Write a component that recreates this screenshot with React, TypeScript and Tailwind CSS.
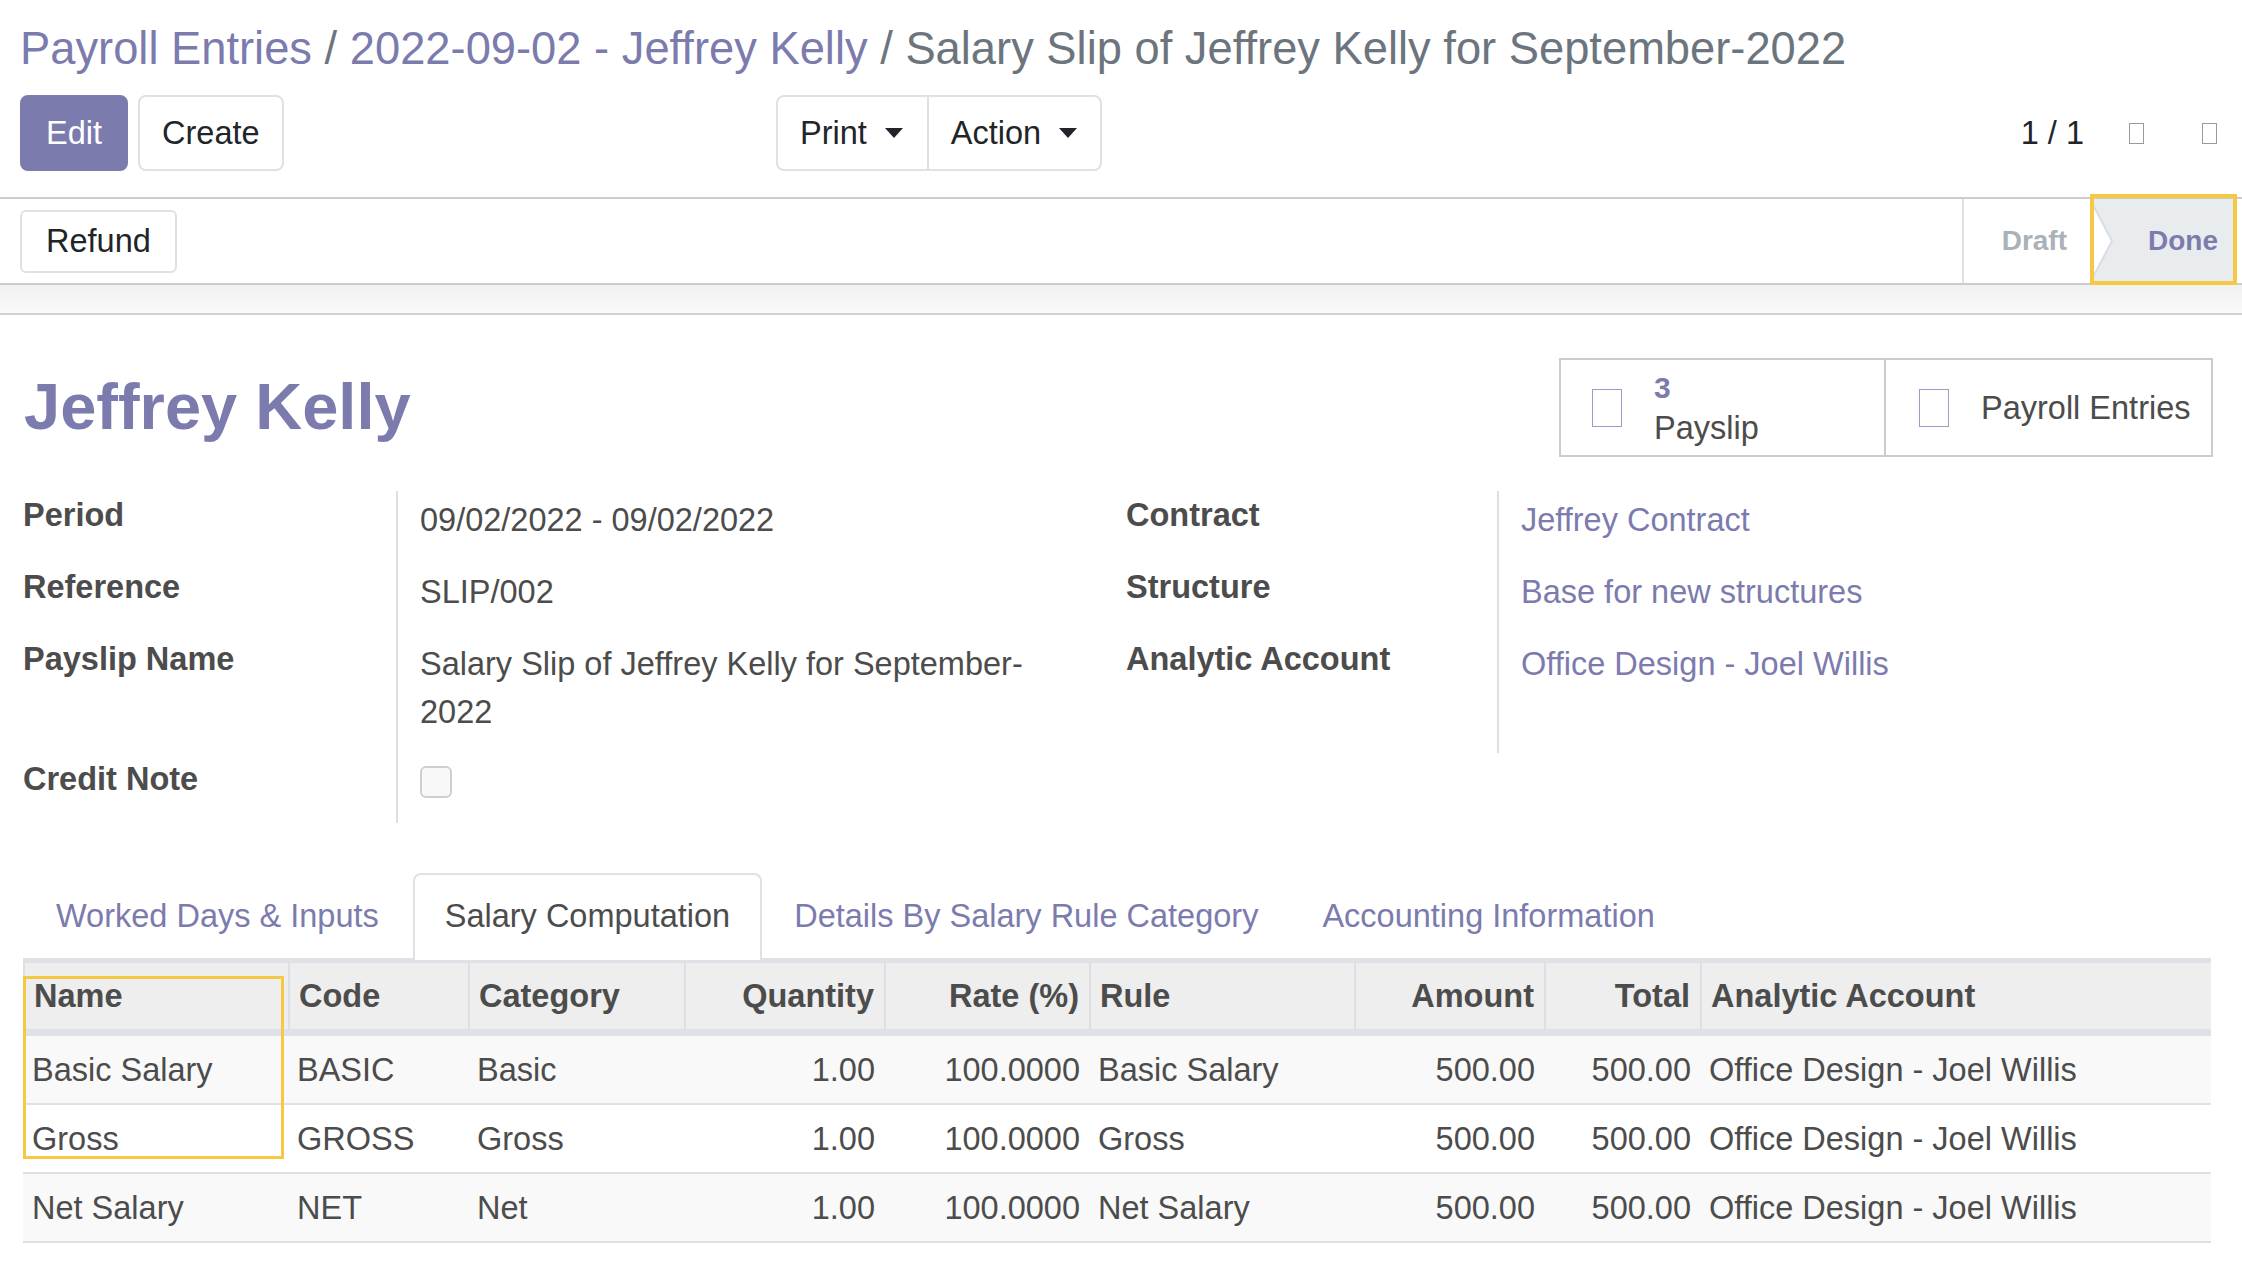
import React from 'react';

const PURPLE = 'text-[#7c7bad]';

type Line = {
  name: string;
  code: string;
  category: string;
  rule: string;
};

const LINES: Line[] = [
  { name: 'Basic Salary', code: 'BASIC', category: 'Basic', rule: 'Basic Salary' },
  { name: 'Gross', code: 'GROSS', category: 'Gross', rule: 'Gross' },
  { name: 'Net Salary', code: 'NET', category: 'Net', rule: 'Net Salary' },
];

const COLS = [
  { label: 'Name', right: false },
  { label: 'Code', right: false },
  { label: 'Category', right: false },
  { label: 'Quantity', right: true },
  { label: 'Rate (%)', right: true },
  { label: 'Rule', right: false },
  { label: 'Amount', right: true },
  { label: 'Total', right: true },
  { label: 'Analytic Account', right: false },
];

const GRID = 'grid grid-cols-[265px_180px_216px_200px_205px_265px_190px_156px_1fr]';

function Caret() {
  return <span className="ml-[18px] inline-block w-0 h-0 border-t-[10px] border-x-[9px] border-x-transparent border-t-[#212529]" />;
}

// missing icon-font glyphs render as hollow boxes in the reference
function Tofu({ className }: { className: string }) {
  return <span className={`inline-block border ${className}`} />;
}

function Field({ label, children, last = false }: { label: string; children?: React.ReactNode; last?: boolean }) {
  return (
    <>
      <div className="font-bold leading-[48px]">{label}</div>
      <div className={`border-l-2 border-[#dedede] pl-[22px] pt-[5px] leading-[48px] ${last ? '' : 'pb-[19px]'}`}>
        {children}
      </div>
    </>
  );
}

export default function App() {
  return (
    <div className="relative min-h-[1280px] w-full bg-white font-['Liberation_Sans',Arial,sans-serif] text-[32.5px] text-[#4c4c4c]">
      {/* control panel */}
      <div className="pl-[20px] pr-[25px] pt-[22px]">
        <div className="text-[45.3px] leading-[53px] whitespace-nowrap">
          <span className={PURPLE}>Payroll Entries</span>
          <span className="text-[#6c757d]"> / </span>
          <span className={PURPLE}>2022-09-02 - Jeffrey Kelly</span>
          <span className="text-[#6c757d]"> / Salary Slip of Jeffrey Kelly for September-2022</span>
        </div>
        <div className="mt-[20px] flex items-center h-[76px] text-[#212529]">
          <div className="w-[756px] flex items-center gap-[10px] h-full">
            <button type="button" className="h-full px-[24px] rounded-[8px] bg-[#7c7bad] border-2 border-[#7c7bad] text-white">Edit</button>
            <button type="button" className="h-full px-[22px] rounded-[8px] border-2 border-[#dee2e6] bg-white">Create</button>
          </div>
          <div className="flex h-full border-2 border-[#dee2e6] rounded-[8px]">
            <div className="flex items-center pl-[22px] pr-[24px]">Print<Caret /></div>
            <div className="flex items-center pl-[22px] pr-[23px] border-l-2 border-[#dee2e6]">Action<Caret /></div>
          </div>
          <div className="ml-auto flex items-center">
            <span>1 / 1</span>
            <Tofu className="ml-[45px] w-[15px] h-[21px] border-[#9a9a9a]" />
            <Tofu className="ml-[58px] w-[15px] h-[21px] border-[#9a9a9a]" />
          </div>
        </div>
      </div>

      {/* status bar */}
      <div className="mt-[26px] h-[88px] border-y-2 border-[#cccccc] flex items-center">
        <button type="button" className="ml-[20px] h-[63px] px-[24px] rounded-[6px] border-2 border-[#dee2e6] bg-white text-[#212529]">Refund</button>
        <div className="ml-auto mr-[5px] flex h-full items-stretch font-bold text-[28px]">
          <div className="flex items-center border-l-2 border-[#dee2e6] pl-[38px] pr-[23px] text-[#aab1b9]">Draft</div>
          <div className={`relative flex items-center w-[147px] pl-[58px] bg-[#e9ecef] ${PURPLE}`}>
            <svg className="absolute left-0 top-0 h-full w-[26px]" viewBox="0 0 26 84" preserveAspectRatio="none">
              <polygon points="0,0 22,42 0,84" fill="#ffffff" />
              <polyline points="0,0 22,42 0,84" fill="none" stroke="#d9dde1" strokeWidth="2" />
            </svg>
            Done
          </div>
        </div>
      </div>

      {/* sheet background strip */}
      <div className="h-[30px] bg-gradient-to-b from-[#f1f1f1] to-[#fafafa] border-b-2 border-[#cfcfd6]" />

      {/* sheet */}
      <div className="pl-[23px] pr-[31px] pt-[44px]">
        <div className="flex justify-between items-start">
          <h1 className={`ml-[1px] mt-[9px] text-[65px] leading-[77px] font-bold ${PURPLE}`}>Jeffrey Kelly</h1>
          <div className="-mr-[2px] -mt-[1px] flex h-[99px] w-[654px] border-2 border-[#cccccc]">
            <div className="flex items-center w-[325px] border-r-2 border-[#cccccc] pl-[31px]">
              <Tofu className="w-[30px] h-[38px] border-[#9d9bc9]" />
              <div className="ml-[32px] leading-[40px]">
                <div className={`font-bold text-[30px] ${PURPLE}`}>3</div>
                <div>Payslip</div>
              </div>
            </div>
            <div className="flex items-center pl-[33px]">
              <Tofu className="w-[30px] h-[38px] border-[#9d9bc9]" />
              <span className="ml-[32px] leading-[48px]">Payroll Entries</span>
            </div>
          </div>
        </div>

        <div className="mt-[34px] flex">
          <div className="w-[1094px] grid grid-cols-[373px_1fr] pr-[50px]">
            <Field label="Period">09/02/2022 - 09/02/2022</Field>
            <Field label="Reference">SLIP/002</Field>
            <Field label="Payslip Name">Salary Slip of Jeffrey Kelly for September-2022</Field>
            <div className="font-bold leading-[48px] h-[68px]">Credit Note</div>
            <div className="border-l-2 border-[#dedede] pl-[22px] pt-[11px] h-[68px]">
              <span className="block w-[32px] h-[32px] rounded-[6px] border-2 border-[#cfcfcf] bg-[#f8f8f8]" />
            </div>
          </div>
          <div className="flex-1 pl-[9px] grid grid-cols-[371px_1fr] content-start">
            <Field label="Contract"><span className={PURPLE}>Jeffrey Contract</span></Field>
            <Field label="Structure"><span className={PURPLE}>Base for new structures</span></Field>
            <Field label="Analytic Account"><span className={PURPLE}>Office Design - Joel Willis</span></Field>
            <div className="h-[46px]" />
            <div className="h-[46px] border-l-2 border-[#dedede]" />
          </div>
        </div>

        {/* notebook */}
        <div className="mt-[50px] flex border-b-2 border-[#dee2e6] leading-[48px]">
          <div className={`ml-[1px] px-[30px] pt-[17px] pb-[16px] border-2 border-transparent ${PURPLE}`}>Worked Days &amp; Inputs</div>
          <div className="ml-[2px] -mb-[2px] px-[30px] pt-[17px] pb-[18px] border-2 border-b-0 border-[#dee2e6] rounded-t-[8px] bg-white">Salary Computation</div>
          <div className={`px-[30px] pt-[17px] pb-[16px] border-2 border-transparent ${PURPLE}`}>Details By Salary Rule Category</div>
          <div className={`px-[30px] pt-[17px] pb-[16px] border-2 border-transparent ${PURPLE}`}>Accounting Information</div>
        </div>

        <div className="border-t-[3px] border-[#dee2e6]">
          <div className={`${GRID} bg-[#eeeeee] border-b-[7px] border-[#dee2e6] font-bold leading-[48px]`}>
            {COLS.map((c) => (
              <div key={c.label} className={`border-l-2 border-[#dcdfe3] pt-[9px] pb-[9px] ${c.right ? 'text-right pr-[10px]' : 'pl-[9px]'}`}>
                {c.label}
              </div>
            ))}
          </div>
          {LINES.map((l, i) => (
            <div key={l.code} className={`${GRID} border-b-2 border-[#dee2e6] leading-[48px] ${i % 2 === 0 ? 'bg-[#f9f9f9]' : 'bg-white'}`}>
              <div className="pl-[9px] pt-[10px] pb-[9px]">{l.name}</div>
              <div className="pl-[9px] pt-[10px] pb-[9px]">{l.code}</div>
              <div className="pl-[9px] pt-[10px] pb-[9px]">{l.category}</div>
              <div className="pr-[9px] pt-[10px] pb-[9px] text-right">1.00</div>
              <div className="pr-[9px] pt-[10px] pb-[9px] text-right">100.0000</div>
              <div className="pl-[9px] pt-[10px] pb-[9px]">{l.rule}</div>
              <div className="pr-[9px] pt-[10px] pb-[9px] text-right">500.00</div>
              <div className="pr-[9px] pt-[10px] pb-[9px] text-right">500.00</div>
              <div className="pl-[9px] pt-[10px] pb-[9px]">Office Design - Joel Willis</div>
            </div>
          ))}
        </div>
      </div>

      {/* yellow annotation frames */}
      <div className="absolute left-[2090px] top-[194px] w-[147px] h-[91px] border-4 border-[#f7c844] pointer-events-none" />
      <div className="absolute left-[23px] top-[976px] w-[261px] h-[183px] border-[3px] border-[#f7c844] pointer-events-none" />
    </div>
  );
}
